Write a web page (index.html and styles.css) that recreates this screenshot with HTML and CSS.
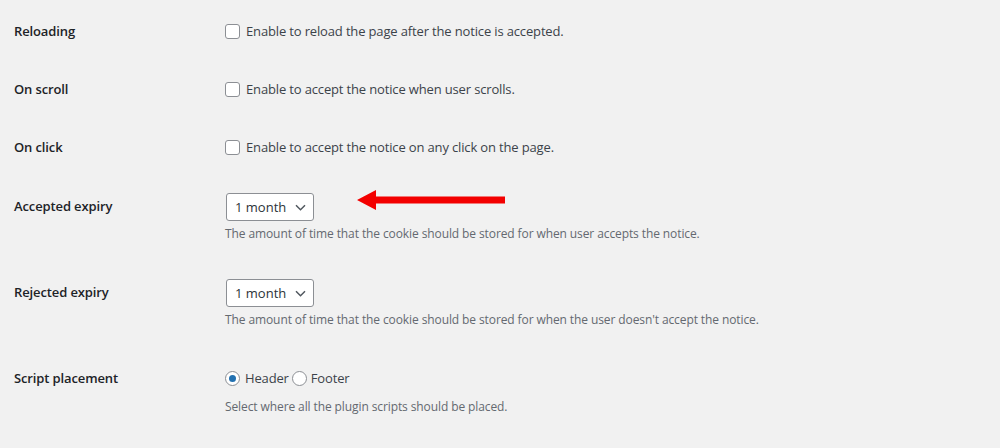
FILE: index.html
```html
<!DOCTYPE html>
<html>
<head>
<meta charset="utf-8">
<link rel="stylesheet" href="styles.css">
</head>
<body>
<div class="settings">
  <div class="row">
    <div class="th">Reloading</div>
    <div class="td"><label class="line"><span class="cb"></span>Enable to reload the page after the notice is accepted.</label></div>
  </div>
  <div class="row">
    <div class="th">On scroll</div>
    <div class="td"><label class="line"><span class="cb"></span>Enable to accept the notice when user scrolls.</label></div>
  </div>
  <div class="row">
    <div class="th">On click</div>
    <div class="td"><label class="line"><span class="cb"></span>Enable to accept the notice on any click on the page.</label></div>
  </div>
  <div class="row row-select">
    <div class="th">Accepted expiry</div>
    <div class="td">
      <div class="select">1 month<svg class="chev" width="11" height="7" viewBox="0 0 11 7"><path d="M1 1.2l4.5 4.5 4.5-4.5" fill="none" stroke="#50575e" stroke-width="1.5"/></svg></div>
      <p class="desc">The amount of time that the cookie should be stored for when user accepts the notice.</p>
    </div>
  </div>
  <div class="row row-select">
    <div class="th">Rejected expiry</div>
    <div class="td">
      <div class="select">1 month<svg class="chev" width="11" height="7" viewBox="0 0 11 7"><path d="M1 1.2l4.5 4.5 4.5-4.5" fill="none" stroke="#50575e" stroke-width="1.5"/></svg></div>
      <p class="desc">The amount of time that the cookie should be stored for when the user doesn't accept the notice.</p>
    </div>
  </div>
  <div class="row row-radio">
    <div class="th">Script placement</div>
    <div class="td">
      <div class="line"><span class="rb checked"></span>Header<span class="rb second"></span>Footer</div>
      <p class="desc desc-radio">Select where all the plugin scripts should be placed.</p>
    </div>
  </div>
</div>
<svg class="arrow" width="150" height="24" viewBox="0 0 150 24"><path d="M0 11 L19 1 L19 7.5 L148 7.5 L148 14.5 L19 14.5 L19 21 Z" fill="#f30000"/></svg>
</body>
</html>
```
FILE: styles.css
```css
html, body {
  margin: 0;
  background: #f1f1f1;
}
body {
  font-family: "Open Sans", "Noto Sans", sans-serif;
  color: #3c434a;
  position: relative;
  width: 1000px;
  height: 448px;
  overflow: hidden;
}
.settings {
  padding: 2px 0 0 14px;
}
.row {
  display: flex;
  padding: 19px 0;
}
.th {
  width: 211px;
  flex: none;
  font-size: 13px;
  letter-spacing: -0.12px;
  font-weight: 600;
  color: #1d2327;
  line-height: 20px;
}
.td {
  flex: 1;
}
.line {
  display: flex;
  align-items: center;
  height: 20px;
  font-size: 13px;
  letter-spacing: -0.15px;
  line-height: 20px;
}
.cb {
  width: 13px;
  height: 13px;
  border: 1px solid #8c8f94;
  border-radius: 3px;
  background: #fff;
  margin-right: 6px;
  flex: none;
}
.row-select {
  padding: 17px 0 19px;
}
.row-select .th {
  padding-top: 3px;
}
.select {
  width: 86px;
  height: 26px;
  margin-left: 1px;
  border: 1px solid #8c8f94;
  border-radius: 3px;
  background: #fff;
  display: flex;
  align-items: center;
  font-size: 13px;
  color: #2c3338;
  text-indent: 8px;
  position: relative;
}
.chev {
  position: absolute;
  right: 7px;
  top: 10px;
}
.desc {
  margin: 4px 0 0;
  font-size: 12px;
  letter-spacing: -0.1px;
  line-height: 18px;
  color: #646970;
}
.row-radio {
  padding: 20px 0 19px;
}
.rb {
  width: 13px;
  height: 13px;
  border: 1px solid #8c8f94;
  border-radius: 50%;
  background: #fff;
  margin-right: 5px;
  flex: none;
  display: flex;
  align-items: center;
  justify-content: center;
}
.rb.second {
  margin-left: 3px;
  margin-right: 4px;
}
.rb.checked::after {
  content: "";
  width: 7px;
  height: 7px;
  border-radius: 50%;
  background: #2271b1;
}
.desc-radio {
  margin-top: 10px;
}
.arrow {
  position: absolute;
  left: 357px;
  top: 189px;
}
```
